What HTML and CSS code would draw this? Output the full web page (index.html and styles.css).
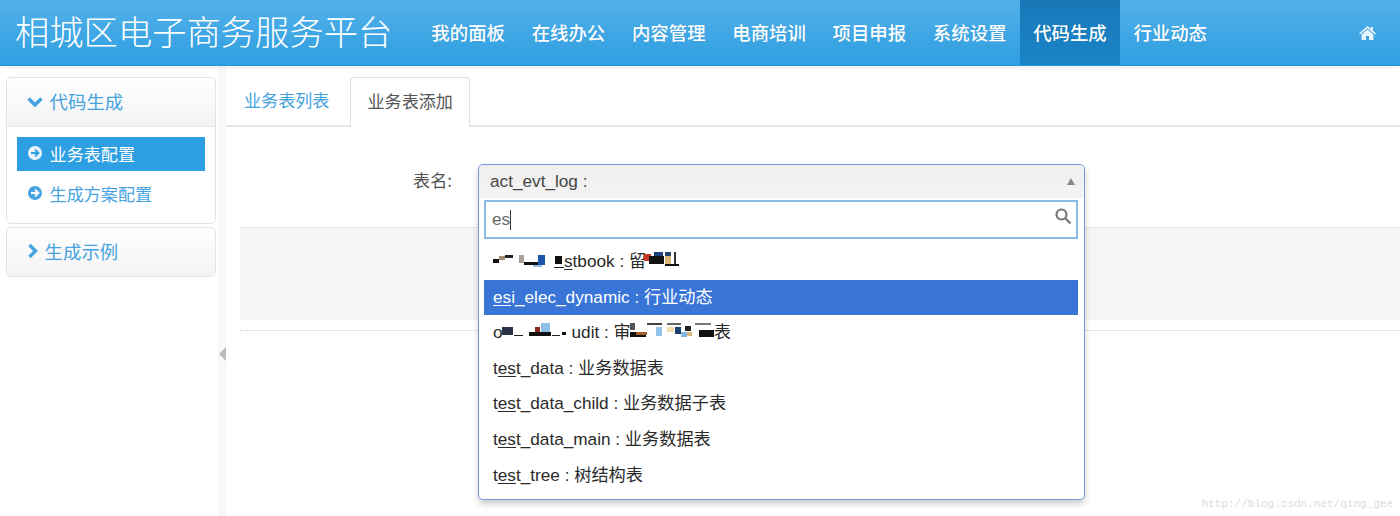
FILE: index.html
```html
<!DOCTYPE html>
<html lang="zh-CN">
<head>
<meta charset="utf-8">
<title>相城区电子商务服务平台</title>
<link rel="stylesheet" href="styles.css">
</head>
<body>
<header class="topbar">
  <div class="brand">相城区电子商务服务平台</div>
  <nav class="mainnav">
    <a class="navitem">我的面板</a>
    <a class="navitem">在线办公</a>
    <a class="navitem">内容管理</a>
    <a class="navitem">电商培训</a>
    <a class="navitem">项目申报</a>
    <a class="navitem">系统设置</a>
    <a class="navitem active">代码生成</a>
    <a class="navitem">行业动态</a>
  </nav>
  <svg class="homeicon" viewBox="0 0 17 14"><path d="M8.5 0 11.6 2.7V1H14V4.8L17 7.4 15.9 8.5 8.5 2.2 1.1 8.5 0 7.4ZM8.5 3.4 14.4 8.5V14H10V10H7V14H2.6V8.5Z"/></svg>
</header>
<div class="layout">
  <aside class="sidebar">
    <section class="panel">
      <div class="panelhead">
        <svg class="chev" viewBox="0 0 16 11"><path d="M1.5 2.5 8 9 14.5 2.5" /></svg>
        <span>代码生成</span>
      </div>
      <ul class="panelbody">
        <li class="sideitem current"><svg class="arrowcircle" viewBox="0 0 14 14"><circle cx="7" cy="7" r="7"/><path class="arr" d="M3 7H10M7 3.6 10.4 7 7 10.4"/></svg>业务表配置</li>
        <li class="sideitem"><svg class="arrowcircle" viewBox="0 0 14 14"><circle cx="7" cy="7" r="7"/><path class="arr" d="M3 7H10M7 3.6 10.4 7 7 10.4"/></svg>生成方案配置</li>
      </ul>
    </section>
    <section class="panel">
      <div class="panelhead collapsed">
        <svg class="chevright" viewBox="0 0 11 16"><path d="M2.5 2 8.5 8 2.5 14" /></svg>
        <span>生成示例</span>
      </div>
    </section>
  </aside>
  <div class="splitter"><i class="splitarrow"></i></div>
  <main class="content">
    <div class="tabs">
      <a class="tab">业务表列表</a>
      <a class="tab selected">业务表添加</a>
    </div>
    <form class="form">
      <div class="formrow">
        <label class="formlabel">表名:</label>
      </div>
      <div class="well"></div>
      <div class="dotline"></div>
    </form>
    <div class="chosen">
      <div class="chosenhead"><span>act_evt_log :</span><i class="caret"></i></div>
      <div class="searchbox">
        <span class="typed">es</span><span class="cursor"></span>
        <svg class="searchicon" viewBox="0 0 17 17"><circle cx="6.5" cy="6.5" r="5"/><path d="M10.5 10.5 15.5 15.5"/></svg>
      </div>
      <ul class="results">
        <li class="result"><svg class="blob b1" viewBox="0 0 71 20"><rect x="0" y="8" width="6" height="4" fill="#111"/><rect x="6" y="5" width="6" height="4" fill="#a08b70"/><rect x="12" y="4" width="8" height="3" fill="#222"/><rect x="26" y="4" width="5" height="8" fill="#aaa095"/><rect x="31" y="11" width="14" height="3" fill="#111"/><rect x="45" y="4" width="7" height="10" fill="#1c56a8"/><rect x="40" y="14" width="9" height="2" fill="#8fbfe8"/><rect x="62" y="5" width="7" height="8" fill="#111"/><rect x="61" y="16" width="10" height="1" fill="#222"/></svg><u>s</u>tbook : 留<svg class="blob b2" viewBox="0 0 35 20"><rect x="0" y="3" width="7" height="7" fill="#c9382a"/><rect x="5" y="5" width="15" height="8" fill="#111"/><rect x="10" y="1" width="9" height="4" fill="#1c3f78"/><rect x="21" y="5" width="6" height="8" fill="#dcb77a"/><rect x="21" y="1" width="6" height="4" fill="#24406e"/><rect x="30" y="1" width="2" height="14" fill="#333"/><rect x="21" y="13" width="14" height="2" fill="#111"/></svg></li>
        <li class="result hi"><u>es</u>i_elec_dynamic : 行业动态</li>
        <li class="result">o<svg class="blob b3" viewBox="0 0 70 20"><rect x="0" y="5" width="11" height="8" fill="#2b3346"/><rect x="12" y="13" width="9" height="1" fill="#222"/><rect x="27" y="10" width="7" height="2" fill="#b8c4d0"/><rect x="33" y="5" width="5" height="5" fill="#8c2a20"/><rect x="27" y="10" width="22" height="4" fill="#111"/><rect x="39" y="1" width="9" height="9" fill="#8fbfe8"/><rect x="50" y="13" width="8" height="1" fill="#222"/><rect x="60" y="10" width="4" height="3" fill="#111"/></svg>udit : 审<svg class="blob b4" viewBox="0 0 85 20"><rect x="1" y="1" width="5" height="7" fill="#555"/><rect x="1" y="10" width="16" height="5" fill="#111"/><rect x="7" y="10" width="11" height="3" fill="#a85e2a"/><rect x="18" y="1" width="15" height="2" fill="#444"/><rect x="27" y="5" width="6" height="9" fill="#8fc3ea"/><rect x="38" y="5" width="7" height="5" fill="#f0dcae"/><rect x="38" y="1" width="14" height="2" fill="#666"/><rect x="46" y="5" width="6" height="7" fill="#1d3f70"/><rect x="52" y="10" width="6" height="5" fill="#7fb8e4"/><rect x="56" y="4" width="6" height="5" fill="#222"/><rect x="58" y="10" width="5" height="4" fill="#dcb77a"/><rect x="66" y="1" width="16" height="2" fill="#777"/><rect x="70" y="8" width="15" height="7" fill="#111"/></svg>表</li>
        <li class="result">t<u>es</u>t_data : 业务数据表</li>
        <li class="result">t<u>es</u>t_data_child : 业务数据子表</li>
        <li class="result">t<u>es</u>t_data_main : 业务数据表</li>
        <li class="result">t<u>es</u>t_tree : 树结构表</li>
      </ul>
    </div>
  </main>
</div>
<div class="watermark">http://blog.csdn.net/qing_gee</div>
</body>
</html>
```

FILE: styles.css
```css
* { box-sizing: border-box; }
html, body { margin: 0; padding: 0; height: 516px; overflow: hidden; background: #fff; }
body { font-family: "Liberation Sans", "Noto Sans CJK SC", sans-serif; color: #555; position: relative; }
ul { list-style: none; margin: 0; padding: 0; }

.topbar {
  height: 66px; display: flex; align-items: stretch; position: relative; z-index: 2;
  background: linear-gradient(#52b1ea, #2f9ee0);
  border-bottom: 1px solid #2a94d6;
  box-shadow: 0 2px 6px rgba(0, 0, 0, .07);
}
.brand { width: 418px; padding-left: 15px; font-size: 34.3px; line-height: 61px; color: #fff; font-family: "Noto Sans CJK SC", sans-serif; font-weight: 300; white-space: nowrap; }
.mainnav { display: flex; flex: 1; }
.navitem { width: 100.3px; text-align: center; font-size: 18.4px; line-height: 65px; color: #fff; font-family: "Noto Sans CJK SC", sans-serif; font-weight: 500; text-shadow: 0 0 1px rgba(0,0,0,.1); }
.navitem.active { background: linear-gradient(#1878b8, #1a85c8); }
.homeicon { width: 17px; height: 14px; fill: #e8f4fc; margin: 26px 24px 0 0; }

.layout { display: flex; height: 450px; }
.sidebar { width: 218px; padding: 11px 2px 0 6px; display: flex; flex-direction: column; gap: 3px; flex: none; }
.panel { border: 1px solid #e3e3e3; border-radius: 5px; background: #fff; }
.panelhead { height: 49px; display: flex; align-items: center; padding: 0 0 2px 20px; gap: 6.6px; font-size: 18.4px; color: #45a3e0; font-family: "Noto Sans CJK SC", sans-serif; background: linear-gradient(#fff, #f3f3f3); border-bottom: 1px solid #e8e8e8; border-radius: 5px 5px 0 0; }
.panelhead.collapsed { height: 48px; border-bottom: 0; border-radius: 5px; padding-left: 21px; }
.chev { width: 16px; height: 11px; fill: none; stroke: #45a3e0; stroke-width: 3.4; }
.chevright { width: 11px; height: 16px; fill: none; stroke: #45a3e0; stroke-width: 3.4; margin-left: -1px; }
.panelbody { padding: 10px 10px 11px; height: 96px; }
.sideitem { height: 34px; margin-bottom: 6px; display: flex; align-items: center; padding: 0 0 2px 11px; gap: 7.6px; font-size: 17.1px; color: #45a3e0; font-family: "Noto Sans CJK SC", sans-serif; }
.sideitem.current { background: #2f9fe3; color: #fff; }
.arrowcircle { width: 14px; height: 14px; flex: none; fill: #45a3e0; }
.current .arrowcircle { fill: #e8f4fc; }
.arr { fill: none; stroke: #fff; stroke-width: 2; }
.current .arr { stroke: #2f9fe3; }

.splitter { width: 8px; background: #f8f8f8; flex: none; display: flex; align-items: center; height: 450px; padding-top: 126px; }
.splitarrow { width: 0; height: 0; border-style: solid; border-width: 7px 7px 7px 0; border-color: transparent #bbb transparent transparent; margin-left: 1px; }

.content { flex: 1; position: relative; min-width: 0; }
.tabs { height: 61px; display: flex; align-items: flex-end; padding-top: 11px; gap: 3px; border-bottom: 2px solid #e6e6e6; }
.tab { height: 49px; padding: 0 17px; line-height: 45px; font-size: 17.1px; color: #45a3e0; border: 1px solid transparent; font-family: "Noto Sans CJK SC", sans-serif; }
.tab.selected { height: 50px; padding: 0 16px; margin-bottom: -2px; color: #555; background: #fff; border: 1px solid #e0e0e0; border-bottom: 0; border-radius: 4px 4px 0 0; }
.form { padding: 0 0 0 14px; }
.formrow { height: 100px; padding-top: 40px; }
.formlabel { display: block; width: 212px; text-align: right; font-size: 17.1px; line-height: 26px; color: #555; font-family: "Noto Sans CJK SC", sans-serif; }
.well { height: 93px; background: #f5f5f5; border-top: 1px solid #e5e5e5; }
.dotline { margin-top: 10px; border-top: 1px dotted #ccc; }

.chosen { position: absolute; left: 252px; top: 98px; width: 607px; height: 336px; background: #fff; border: 1px solid #6f9fdc; border-radius: 5px; box-shadow: 0 4px 6px rgba(0, 0, 0, .2); z-index: 3; display: flex; flex-direction: column; }
.chosenhead { height: 33px; padding: 0 11px; display: flex; align-items: center; justify-content: space-between; font-size: 17.2px; color: #444; background: linear-gradient(#eee, #f4f4f4); border-radius: 5px 5px 0 0; flex: none; }
.caret { width: 0; height: 0; border-style: solid; border-width: 0 4.5px 7px 4.5px; border-color: transparent transparent #888 transparent; margin-right: -2px; }
.searchbox { height: 39px; margin: 2px 6px 0 5px; border: 2px solid #8dbbe8; display: flex; align-items: center; padding-left: 6px; font-size: 17.2px; color: #666; position: relative; flex: none; }
.cursor { width: 1px; height: 20px; background: #333; }
.searchicon { position: absolute; right: 4px; top: 6px; width: 17px; height: 17px; fill: none; stroke: #777; stroke-width: 2.2; }
.results { padding: 5px 6px 0 5px; flex: 1; }
.result { height: 35.6px; line-height: 35.6px; padding-left: 9px; font-size: 17.2px; color: #2a2a2a; white-space: nowrap; }
.result.hi { background: #3875d7; color: #fff; }
.result u { text-underline-offset: 2px; }
.blob { display: inline-block; vertical-align: -4px; height: 20px; }
.b1 { width: 71px; }
.b2 { width: 35px; margin-left: -2px; }
.b3 { width: 70px; margin-left: -1px; }
.b4 { width: 85px; margin-left: -2px; }

.watermark { position: absolute; right: 7px; bottom: 6px; font-family: "Liberation Mono", monospace; font-size: 11px; color: #dcdcdc; }
```
